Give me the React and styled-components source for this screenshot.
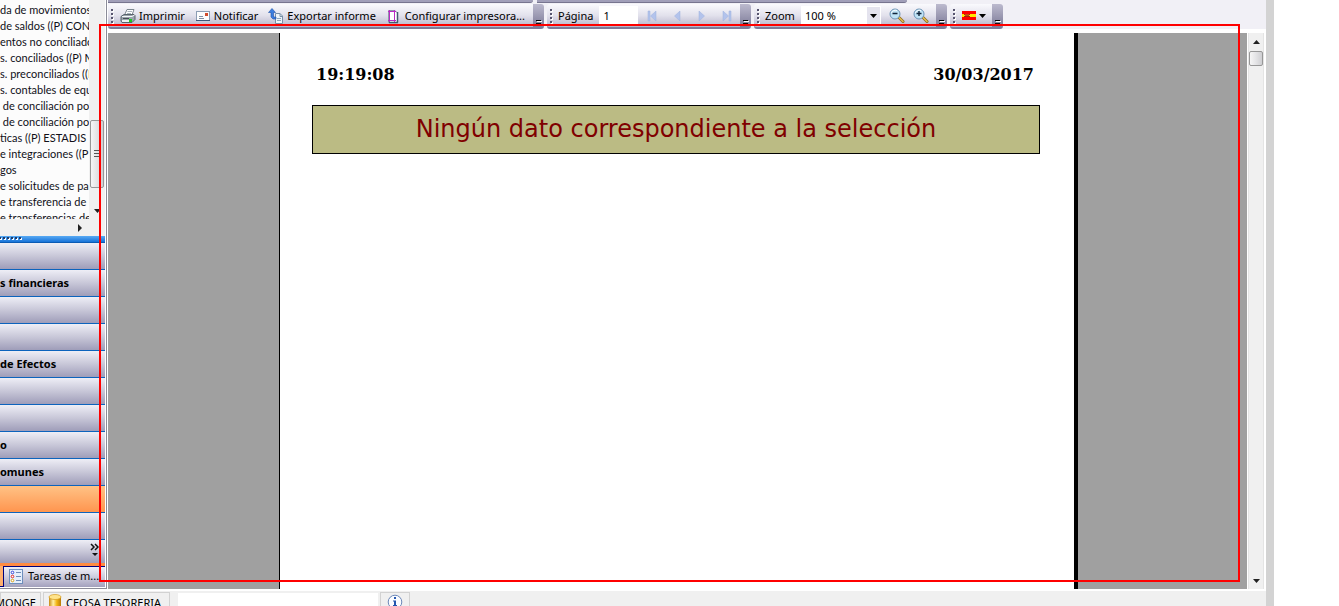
import React from "react";
import styled, { createGlobalStyle, css } from "styled-components";

const Global = createGlobalStyle`
  * { box-sizing: border-box; }
  body { margin: 0; background: #fff; overflow: hidden; }
  body, button, input, select {
    font-family: "Noto Sans", "Open Sans", sans-serif;
    font-size: 11px;
    line-height: 16px;
    color: #000;
  }
`;

const Window = styled.div`
  position: relative;
  display: flex;
  height: 100vh;
  padding-right: 65px;
  overflow: hidden;
`;

const Frame = styled.div`
  flex: 1;
  min-width: 0;
  display: flex;
  flex-direction: column;
  border-right: 8px solid #d3d3d3;
`;

const Body = styled.div`
  flex: 1;
  min-height: 0;
  display: flex;
`;

const Sidebar = styled.aside`
  flex: none;
  width: 107px;
  display: flex;
  flex-direction: column;
  padding: 0 1px 1px 0;
  border-right: 1px solid #8b8c98;
  border-bottom: 1px solid #8b8c98;
  margin-bottom: 2px;
`;

const TreeArea = styled.div`
  flex: 1;
  min-height: 0;
  display: flex;
`;

const Tree = styled.ul`
  flex: 1;
  min-width: 0;
  margin: 0;
  padding: 2px 0 0;
  list-style: none;
  overflow: hidden;
  background: #fcfcfc;
`;

const TreeItem = styled.li`
  height: 16px;
  font-family: Lato, "Liberation Sans", sans-serif;
  font-size: 11px;
  line-height: 16px;
  white-space: pre;
  color: #101018;
`;

const SideScroll = styled.div`
  width: 16px;
  display: flex;
  flex-direction: column;
  align-items: center;
  background: #f0f0f0;
  padding: 120px 1px 6px;
`;

const Thumb = styled.div`
  width: 14px;
  height: ${(p) => p.$h}px;
  flex: none;
  display: flex;
  flex-direction: column;
  align-items: center;
  justify-content: center;
  border: 1px solid #979797;
  border-radius: 2px;
  background: linear-gradient(90deg, #f6f6f6, #e4e4e6 50%, #cfcfd2);
  margin-bottom: auto;
`;

const HScroll = styled.div`
  height: 17px;
  flex: none;
  display: flex;
  align-items: center;
  justify-content: flex-end;
  padding-right: 23px;
  background: #f0f0f0;
`;

const Splitter = styled.div`
  height: 7px;
  flex: none;
  padding-top: 1px;
  background: linear-gradient(#58aaf4, #1672d8);
  border-bottom: 1px solid #0a5ab4;
`;

const NavButton = styled.button`
  display: block;
  flex: none;
  width: 100%;
  height: 27px;
  padding: 0;
  border: 0;
  border-bottom: 1px solid #0c63bd;
  text-align: left;
  white-space: pre;
  font-weight: 700;
  background: ${(p) =>
    p.$active
      ? "linear-gradient(#ffc285, #ff954f)"
      : "linear-gradient(#eeeef6, #c8c7d8 50%, #9f9db9)"};
`;

const Overflow = styled.button`
  height: 23px;
  flex: none;
  border: 0;
  padding: 0 6px 2px 0;
  display: flex;
  align-items: center;
  justify-content: flex-end;
  background: linear-gradient(#eeeef6, #c8c7d8 50%, #9f9db9);
`;

const Tabs = styled.div`
  flex: none;
  height: 24px;
  display: flex;
  padding-top: 3px;
  background: #ff8b42;
`;

const TabStub = styled.div`
  width: 3px;
  background: #ffb06e;
  border-bottom: 1px solid #00007c;
`;

const Tab = styled.button`
  flex: 1;
  min-width: 0;
  display: flex;
  align-items: center;
  gap: 5px;
  padding: 0 0 2px 5px;
  border: 0;
  border-left: 1px solid #00007c;
  border-top: 1px solid #00007c;
  white-space: nowrap;
  overflow: hidden;
  background: linear-gradient(#f0f0f8, #c5c4d7 60%, #a3a1bd);
`;

const Main = styled.main`
  flex: 1;
  min-width: 0;
  display: flex;
  flex-direction: column;
  padding-left: 1px;
`;

const ToolArea = styled.div`
  flex: none;
  background: #f1f0f6;
`;

const TopStrip = styled.div`
  display: flex;
  gap: 4px;
  height: 3px;
`;

const StripPiece = styled.div`
  width: ${(p) => p.$w}px;
  background: #a19fb9;
  border-bottom: 1px solid #77758f;
  border-bottom-right-radius: 3px;
`;

const Toolbars = styled.div`
  display: flex;
  gap: 3px;
  padding-top: 1px;
`;

const Toolbar = styled.div`
  width: ${(p) => p.$w}px;
  height: 25px;
  display: flex;
  align-items: stretch;
  border-radius: 3px;
  overflow: hidden;
  border-bottom: 2px solid #7d7b99;
  background: linear-gradient(#fafafd, #e2e1ec 50%, #b6b4cb);
`;

const Cap = styled.div`
  flex: none;
  width: 11px;
  margin-left: auto;
  display: flex;
  align-items: flex-end;
  justify-content: center;
  background: linear-gradient(#bcbace, #7c7a97);
`;

const ToolButton = styled.button`
  display: flex;
  align-items: center;
  gap: 3px;
  padding: ${(p) => (p.$tight ? "0" : "0 6px 0 4px")};
  border: 0;
  background: none;
  white-space: nowrap;
`;

const ToolLabel = styled.label`
  display: flex;
  align-items: center;
  gap: 6px;
  padding-left: 3px;
`;

const fieldStyle = css`
  height: 19px;
  border: 0;
  border-radius: 0;
  padding: 0 4px;
  background: #fff;
  outline: none;
`;

const PageInput = styled.input`
  ${fieldStyle}
  width: 39px;
`;

const SelectWrap = styled.span`
  display: grid;
  align-items: center;
  > * { grid-area: 1 / 1; }
  > svg { justify-self: end; pointer-events: none; }
`;

const ZoomSelect = styled.select`
  ${fieldStyle}
  width: 80px;
  appearance: none;
`;

const IconGroup = styled.div`
  display: flex;
  align-items: stretch;
  gap: ${(p) => p.$gap}px;
  padding-left: 8px;
`;

const Viewer = styled.div`
  flex: 1;
  min-height: 0;
  display: flex;
  margin: 4px 2px 2px 0;
`;

const Canvas = styled.div`
  flex: 1;
  min-width: 0;
  display: flex;
  padding: 0 169px 0 171px;
  background: #a0a0a0;
`;

const Sheet = styled.article`
  flex: 1;
  min-width: 0;
  padding: 30px 34px 0 32px;
  border-left: 1px solid #000;
  border-right: 4px solid #000;
  background: #fff;
`;

const SheetHead = styled.header`
  display: flex;
  justify-content: space-between;
  padding: 0 6px 0 4px;
  font-family: "DejaVu Serif", serif;
  font-size: 16px;
  font-weight: 700;
  line-height: 24px;
`;

const Banner = styled.p`
  margin: 18px 0 0;
  height: 49px;
  border: 1px solid #000;
  background: #bbbb84;
  color: #800000;
  text-align: center;
  white-space: nowrap;
  font-family: "DejaVu Sans", Verdana, sans-serif;
  font-size: 24px;
  line-height: 46px;
`;

const VScroll = styled.div`
  width: 16px;
  display: flex;
  flex-direction: column;
  align-items: center;
  padding: 7px 0 6px;
  margin-left: 1px;
  background: #f0f0f0;
  border-left: 1px solid #e4e4e4;
  border-right: 1px solid #e4e4e4;
  svg:first-child { margin-bottom: 7px; }
`;

const Status = styled.footer`
  flex: none;
  height: 15px;
  display: flex;
  align-items: flex-start;
  gap: 2px;
  padding-top: 1px;
  overflow: hidden;
  background: #f0f0f0;
`;

const StatusCell = styled.div`
  flex: none;
  width: ${(p) => p.$w}px;
  height: 22px;
  display: flex;
  align-items: center;
  justify-content: ${(p) => p.$align || "center"};
  gap: 4px;
  padding: 0 4px;
  border: 1px solid #d2d2d2;
  white-space: nowrap;
`;

const StatusField = styled.div`
  flex: none;
  width: 200px;
  height: 22px;
  margin: 1px 0 0 6px;
  background: #fff;
`;

const Highlight = styled.div`
  position: absolute;
  top: 24px;
  right: 99px;
  bottom: 24px;
  left: 99px;
  border: 2px solid #f00;
  pointer-events: none;
`;

const Arrow = ({ dir, color = "#222" }) => {
  const d = {
    up: "M0 4L3.500 0L7 4Z",
    down: "M0 0H7L3.500 4Z",
    right: "M0 0L4 4L0 8Z",
  }[dir];
  return dir === "right" ? (
    <svg width="4" height="8"><path d={d} fill={color} /></svg>
  ) : (
    <svg width="7" height="4"><path d={d} fill={color} /></svg>
  );
};

const Grip = () => (
  <svg width="8" height="23" viewBox="0 0 8 23">
    {[5, 9, 13, 17].map((y) => (
      <g key={y}>
        <rect x="4" y={y + 1} width="2" height="2" fill="#fff" />
        <rect x="3" y={y} width="2" height="2" fill="#57556f" />
      </g>
    ))}
  </svg>
);

const BarEnd = () => (
  <Cap>
    <svg width="8" height="8" viewBox="0 0 8 8">
      <path d="M2 2.500H7M3 6.500H8" stroke="#fff" />
      <path d="M1 1.500H6" stroke="#000" />
      <path d="M1 4H6V5H5L3.500 6.500L2 5H1Z" fill="#111" />
    </svg>
  </Cap>
);

const PrinterIcon = () => (
  <svg width="16" height="16" viewBox="0 0 16 16">
    <path d="M4.500 7L7 1.500H14L12 7Z" fill="#fff" stroke="#7c8790" />
    <path d="M7.500 3.500H12M7 5.500H11" stroke="#a9b3bc" />
    <path d="M1 8.500L4 6.500H14L15 7.500V11.500L12 14.500H2L1 13Z" fill="#9aa4ad" stroke="#59636c" />
    <path d="M2 8.500H12L14.500 7" fill="none" stroke="#f5f7f9" />
    <path d="M3 10H9V11H3Z" fill="#454d54" />
    <path d="M2 12H10V14H2Z" fill="#eef1f3" />
    <rect x="9" y="11" width="3" height="3" fill="#1fc81f" />
  </svg>
);

const MailIcon = () => (
  <svg width="16" height="16" viewBox="0 0 16 16">
    <rect x="1.500" y="3.500" width="13" height="9" fill="#fcfcfd" stroke="#8c9db4" />
    <path d="M1 12.500H15" stroke="#3f577a" />
    <path d="M4 8.500H8M4 10.500H9" stroke="#7f8fa6" />
    <rect x="10" y="5" width="3" height="3" fill="#d24b2c" />
  </svg>
);

const ExportIcon = () => (
  <svg width="16" height="16" viewBox="0 0 16 16">
    <path d="M7.500 5.500H12L14.500 8V15.500H7.500Z" fill="#eef4fa" stroke="#7890a8" />
    <path d="M12 5.500V8.500H15" fill="none" stroke="#7890a8" />
    <path d="M9 10.500H13M9 12.500H13" stroke="#8fa5ba" />
    <path d="M4 .5L7.500 4.500H5.500V9H8V11H5L3 9V4.500H.5Z" fill="#3b7ee0" stroke="#1f51a6" strokeWidth=".6" />
  </svg>
);

const SetupIcon = () => (
  <svg width="16" height="16" viewBox="0 0 16 16">
    <path d="M2.500 2.500H9L11.500 5V14.500H2.500Z" fill="#fff" stroke="#8d9ca8" />
    <path d="M11.500 4V14.500M3 14.500H12" stroke="#435b70" strokeWidth="1.500" />
    <path d="M3.500 2V14M8.500 2V14M2 3.500H10M2 12.500H10" stroke="#b92bc4" />
  </svg>
);

const PageNavIcon = ({ kind }) => (
  <svg width="12" height="14" viewBox="0 0 12 14">
    <g fill="#b3c3ec" stroke="#9fb2df" strokeWidth=".5">
      {kind === "first" && <path d="M2 2H4V12H2ZM10 2V12L4.500 7Z" />}
      {kind === "prev" && <path d="M9 2V12L3.500 7Z" />}
      {kind === "next" && <path d="M3 2V12L8.500 7Z" />}
      {kind === "last" && <path d="M8 2H10V12H8ZM2 2V12L7.500 7Z" />}
    </g>
  </svg>
);

const MagnifierIcon = ({ plus }) => (
  <svg width="16" height="16" viewBox="0 0 16 16">
    <path d="M10 9.500L14 13.500" stroke="#8a6a22" strokeWidth="3" strokeLinecap="round" />
    <path d="M10 9.500L14 13.500" stroke="#e9c250" strokeWidth="1.500" strokeLinecap="round" />
    <circle cx="6" cy="6" r="5" fill="#bfe3f6" stroke="#6d93b5" />
    <path d="M2.500 5A4 4 0 0 1 8 2.500" fill="none" stroke="#fff" />
    <path d={plus ? "M3.500 5.500H8.500M6 3V8" : "M3.500 5.500H8.500"} stroke="#12253b" strokeWidth="1.400" />
  </svg>
);

const FlagIcon = () => (
  <svg width="14" height="9" viewBox="0 0 14 9">
    <rect width="14" height="9" fill="#f00" />
    <rect y="3" width="14" height="3" fill="#ffe600" />
    <path d="M3 3H7V6H3Z" fill="#c64a10" />
    <path d="M2 3.500H3M7 3.500H8M2 5.500H8" stroke="#a12a08" />
  </svg>
);

const TasksIcon = () => (
  <svg width="14" height="15" viewBox="0 0 14 15">
    <rect x=".5" y=".5" width="13" height="14" fill="#e5effc" stroke="#6e8fbc" />
    <path d="M7 3.500H12M7 7.500H12M7 11.500H12" stroke="#6d8bb8" />
    <g fill="#fff" strokeWidth="1">
      <circle cx="3.500" cy="3.500" r="1.300" stroke="#3443d8" />
      <circle cx="3.500" cy="7.500" r="1.300" stroke="#e02626" />
      <circle cx="3.500" cy="11.500" r="1.300" stroke="#dfa413" />
    </g>
  </svg>
);

const DatabaseIcon = () => (
  <svg width="14" height="18" viewBox="0 0 14 18">
    <defs>
      <linearGradient id="gold">
        <stop offset="0" stopColor="#c98a12" />
        <stop offset=".35" stopColor="#fff0a8" />
        <stop offset=".65" stopColor="#f2b413" />
        <stop offset="1" stopColor="#b97a08" />
      </linearGradient>
    </defs>
    <path d="M1 3V15C1 18 13 18 13 15V3Z" fill="url(#gold)" />
    <ellipse cx="7" cy="3" rx="6" ry="2.500" fill="#ffe48c" stroke="#d49a1c" strokeWidth=".7" />
  </svg>
);

const InfoIcon = () => (
  <svg width="16" height="18" viewBox="0 0 16 18">
    <circle cx="8" cy="8" r="6.800" fill="#fafcff" stroke="#6b87b8" />
    <path d="M7 3H9V5H7ZM6 6.500H9V11H10V12H6V11H7V7.500H6Z" fill="#2457b0" />
  </svg>
);

const treeItems = [
  "da de movimientos",
  "de saldos ((P) CON",
  "entos no conciliado",
  "s. conciliados ((P) M",
  "s. preconciliados ((P",
  "s. contables de equ",
  " de conciliación po",
  " de conciliación po",
  "ticas ((P) ESTADIS",
  "e integraciones ((P",
  "gos",
  "e solicitudes de pa",
  "e transferencia de",
  "e transferencias de",
];

const navItems = ["", "s financieras", "", "", "de Efectos", "", "", "o", "omunes", "", ""];

export default function App() {
  return (
    <Window>
      <Global />
      <Frame>
        <Body>
          <Sidebar>
            <TreeArea>
              <Tree>
                {treeItems.map((t, i) => <TreeItem key={i}>{t}</TreeItem>)}
              </Tree>
              <SideScroll>
                <Thumb $h={68}>
                  <svg width="8" height="8">
                    <path d="M1 .5H7M1 3.500H7M1 6.500H7" stroke="#555" />
                  </svg>
                </Thumb>
                <Arrow dir="down" />
              </SideScroll>
            </TreeArea>
            <HScroll><Arrow dir="right" /></HScroll>
            <Splitter>
              <svg width="22" height="4" display="block">
                {[0, 4, 8, 12, 16, 20].map((x) => (
                  <g key={x}>
                    <rect x={x} y="1" width="2" height="2" fill="#fff" />
                    <rect x={x - 1} y="0" width="2" height="2" fill="#1d3c6e" />
                  </g>
                ))}
              </svg>
            </Splitter>
            {navItems.map((t, i) => (
              <NavButton key={i} type="button" $active={i === 9}>{t}</NavButton>
            ))}
            <Overflow type="button" aria-label="Más opciones">
              <svg width="9" height="15" viewBox="0 0 9 15">
                <path d="M1 1L4 4L1 7M5 1L8 4L5 7" fill="none" stroke="#111" strokeWidth="1.500" />
                <path d="M2 10H8L5 13Z" fill="#111" />
              </svg>
            </Overflow>
            <Tabs>
              <TabStub />
              <Tab type="button"><TasksIcon />Tareas de m...</Tab>
            </Tabs>
          </Sidebar>

          <Main>
            <ToolArea>
              <TopStrip>
                <StripPiece $w={425} />
                <StripPiece $w={370} />
              </TopStrip>
              <Toolbars>
                <Toolbar $w={436}>
                  <Grip />
                  <ToolButton type="button"><PrinterIcon />Imprimir</ToolButton>
                  <ToolButton type="button"><MailIcon />Notificar</ToolButton>
                  <ToolButton type="button"><ExportIcon />Exportar informe</ToolButton>
                  <ToolButton type="button"><SetupIcon />Configurar impresora...</ToolButton>
                  <BarEnd />
                </Toolbar>
                <Toolbar $w={204}>
                  <Grip />
                  <ToolLabel>Página<PageInput defaultValue="1" /></ToolLabel>
                  <IconGroup $gap={13}>
                    {["first", "prev", "next", "last"].map((k) => (
                      <ToolButton key={k} type="button" $tight aria-label={k}>
                        <PageNavIcon kind={k} />
                      </ToolButton>
                    ))}
                  </IconGroup>
                  <BarEnd />
                </Toolbar>
                <Toolbar $w={193}>
                  <Grip />
                  <ToolLabel>
                    Zoom
                    <SelectWrap>
                      <ZoomSelect defaultValue="100 %"><option>100 %</option></ZoomSelect>
                      <svg width="14" height="19" viewBox="0 0 14 19">
                        <rect width="13" height="17" x="0" y="1" fill="#e4e3ee" />
                        <path d="M3 8H10L6.500 12Z" fill="#000" />
                      </svg>
                    </SelectWrap>
                  </ToolLabel>
                  <IconGroup $gap={8}>
                    <ToolButton type="button" $tight aria-label="Reducir"><MagnifierIcon /></ToolButton>
                    <ToolButton type="button" $tight aria-label="Ampliar"><MagnifierIcon plus /></ToolButton>
                  </IconGroup>
                  <BarEnd />
                </Toolbar>
                <Toolbar $w={53}>
                  <Grip />
                  <ToolButton type="button" aria-label="Idioma">
                    <FlagIcon />
                    <Arrow dir="down" color="#000" />
                  </ToolButton>
                  <BarEnd />
                </Toolbar>
              </Toolbars>
            </ToolArea>

            <Viewer>
              <Canvas>
                <Sheet>
                  <SheetHead>
                    <time>19:19:08</time>
                    <time>30/03/2017</time>
                  </SheetHead>
                  <Banner>Ningún dato correspondiente a la selección</Banner>
                </Sheet>
              </Canvas>
              <VScroll>
                <Arrow dir="up" />
                <Thumb $h={15} />
                <Arrow dir="down" />
              </VScroll>
            </Viewer>
          </Main>
        </Body>

        <Status>
          <StatusCell $w={41} $align="flex-end">MONGE</StatusCell>
          <StatusCell $w={127} $align="flex-start"><DatabaseIcon />CEOSA TESORERIA</StatusCell>
          <StatusField />
          <StatusCell $w={30}><InfoIcon /></StatusCell>
        </Status>
      </Frame>
      <Highlight />
    </Window>
  );
}
